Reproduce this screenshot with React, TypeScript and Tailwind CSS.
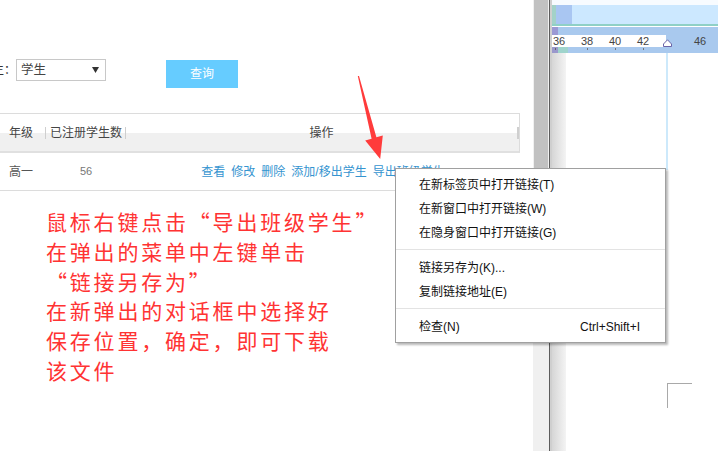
import React from "react";

const ui = { fontFamily: '"Liberation Sans", "Noto Sans CJK SC", sans-serif' };
const cjk = { fontFamily: '"Noto Sans CJK SC", sans-serif' };

const links = ["查看", "修改", "删除", "添加/移出学生", "导出班级学生"];

const note = [
    "鼠标右键点击“导出班级学生”",
    "在弹出的菜单中左键单击",
    "“链接另存为”",
    "在新弹出的对话框中选择好",
    "保存位置，确定，即可下载",
    "该文件",
];

function MenuItem({ label, shortcut }: { label: string; shortcut?: string }) {
    return (
        <div className="flex h-[24px] items-center justify-between pl-[23px] pr-[25px] text-[12px] text-[#111]">
            <span>{label}</span>
            {shortcut && <span>{shortcut}</span>}
        </div>
    );
}

function Sep() {
    return <div className="mt-[4px] mb-[6px] h-px bg-[#e3e3e3]" />;
}

export default function App() {
    return (
        <div className="relative flex h-[451px] w-[718px] overflow-hidden bg-white" style={ui}>
            {/* left page */}
            <div className="flex h-full w-[533px] flex-col bg-white">
                {/* search bar */}
                <div className="mt-[59px] flex items-start">
                    <span className="-ml-[8px] w-[24px] text-[12px] leading-[22px] text-[#333]">生：</span>
                    <div className="flex h-[22px] w-[90px] items-center justify-between border border-[#c8c8c8] pl-[4px] pr-[6px] text-[12.5px] text-[#444]">
                        <span>学生</span>
                        <svg width="7" height="6" viewBox="0 0 7 6">
                            <polygon points="0,0 7,0 3.5,6" fill="#333" />
                        </svg>
                    </div>
                    <div className="ml-[60px] mt-[1px] flex h-[28px] w-[72px] items-center justify-center bg-[#66ccff] text-[12px] text-white">
                        查询
                    </div>
                </div>

                {/* table */}
                <div className="mt-[25px] w-[520px]">
                    <div className="flex h-[40px] items-center border-t border-r border-b-2 border-t-[#dcdcdc] border-r-[#dcdcdc] border-b-[#e0e0e0] bg-[linear-gradient(#fff_19px,#f0f0f0_19px)] text-[12px] text-[#444]">
                        <div className="w-[45px] pl-[9px]">年级</div>
                        <div className="h-[12px] w-px bg-[#cfcfcf]" />
                        <div className="w-[79px] pl-[4px]">已注册学生数</div>
                        <div className="h-[12px] w-px bg-[#cfcfcf]" />
                        <div className="flex-1 text-center">操作</div>
                        <div className="h-[12px] w-[2px] bg-[#cfcfcf]" />
                    </div>
                    <div className="flex h-[38px] items-center border-b border-[#dcdcdc] text-[12px]">
                        <div className="w-[46px] pl-[9px] text-[#555]">高一</div>
                        <div className="w-[80px] text-center text-[11px] text-[#777]">56</div>
                        <div className="flex flex-1 justify-center gap-[6px] text-[#3594d0]">
                            {links.map((l) => (
                                <span key={l}>{l}</span>
                            ))}
                        </div>
                    </div>
                </div>

                {/* red note */}
                <div
                    className="mt-[16px] pl-[46px] text-[21px] leading-[29.8px] tracking-[2.8px] whitespace-nowrap text-[#ff3333]"
                    style={cjk}
                    lang="zh-CN"
                >
                    {note.map((line) => (
                        <div key={line}>{line}</div>
                    ))}
                </div>
            </div>

            {/* scrollbar */}
            <div className="h-full w-[16px] bg-[#f0f0f0] pl-[1px]">
                <div className="h-[250px] w-[14px] bg-[#c1c1c1]" />
            </div>

            {/* right document pane */}
            <div className="flex h-full flex-1 border-l border-[#5c5c5c]">
                <div className="h-full w-[2px] bg-[#cfcfcf]" />
                <div className="flex flex-1 flex-col">
                    <div className="h-[5px] bg-[#f7fbff]" />
                    <div className="flex h-[19px]">
                        <div className="w-[4px] bg-[#a3d2c8]" />
                        <div className="w-[16px] bg-[#a9c6f2]" />
                        <div className="flex-1 bg-[#cce8ff]" />
                    </div>
                    <div className="h-[2px] bg-[#8fd0c6]" />
                    <div className="h-px bg-white" />
                    <div className="flex h-[8px]">
                        <div className="w-[6px] bg-[#9b99d4]" />
                        <div className="flex-1 bg-[#a9c9ee]" />
                    </div>
                    {/* ruler */}
                    <div className="relative flex h-[12px] text-[11px] leading-[12px] text-[#444]">
                        <div className="flex w-[114px] bg-white">
                            <span className="w-[21px] pl-[1px]">36</span>
                            <span className="w-[28px] text-center">38</span>
                            <span className="w-[28px] text-center">40</span>
                            <span className="w-[28px] text-center">42</span>
                        </div>
                        <div className="flex-1 bg-[#a9c9ee] pl-[28px]">46</div>
                        <svg className="absolute bottom-0 left-[111px]" width="9" height="8" viewBox="0 0 9 8">
                            <polygon points="0.5,7.5 8.5,7.5 8.5,5 4.5,0.8 0.5,5" fill="#fff" stroke="#6a64a8" strokeWidth="1" />
                        </svg>
                    </div>
                    <div className="flex h-[6px]">
                        <div className="flex w-[6px] justify-center bg-[#9a98cc] pt-[1px]">
                            <div className="h-[2px] w-px bg-[#666]" />
                        </div>
                        <div className="w-[10px] bg-[#9fd4cc]" />
                        <div className="flex flex-1 gap-[27px] bg-[#a9c9ee] pl-[19px] pt-[1px]">
                            <div className="h-[2px] w-px bg-[#777]" />
                            <div className="h-[2px] w-px bg-[#777]" />
                            <div className="h-[2px] w-px bg-[#777]" />
                        </div>
                    </div>
                    {/* page */}
                    <div className="flex flex-1">
                        <div className="w-[14px] bg-gradient-to-r from-[#d6d6d6] to-[#f4f4f4]" />
                        <div className="flex flex-1 flex-col">
                            <div className="ml-[100px] h-[117px] w-[2px] bg-[#cde9fb]" />
                            <div className="ml-[101px] mt-[213px] h-[25px] w-[25px] border-l border-t border-[#a9a9a9]" />
                        </div>
                    </div>
                </div>
            </div>

            {/* red arrow */}
            <svg className="pointer-events-none absolute left-0 top-0" width="718" height="451" viewBox="0 0 718 451">
                <polygon
                    points="357.8,76 359,76 376.4,137.3 382.8,135.4 380.2,159 365.2,140.6 371.6,138.7"
                    fill="#ff3b3b"
                />
            </svg>

            {/* context menu */}
            <div className="absolute left-[395px] top-[168px] h-[175px] w-[271px] border border-[#a0a0a0] bg-white pt-[4px] shadow-[2px_2px_2px_rgba(0,0,0,0.28)]">
                <MenuItem label="在新标签页中打开链接(T)" />
                <MenuItem label="在新窗口中打开链接(W)" />
                <MenuItem label="在隐身窗口中打开链接(G)" />
                <Sep />
                <MenuItem label="链接另存为(K)..." />
                <MenuItem label="复制链接地址(E)" />
                <Sep />
                <MenuItem label="检查(N)" shortcut="Ctrl+Shift+I" />
            </div>
        </div>
    );
}
